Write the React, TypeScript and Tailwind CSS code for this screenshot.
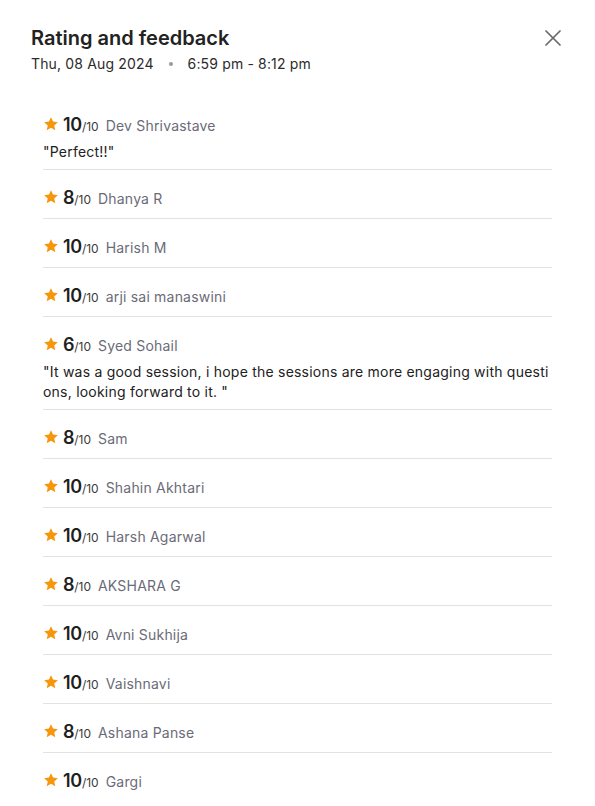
import { X } from "lucide-react";

type Feedback = {
  rating: number;
  name: string;
  comment?: string;
};

const FEEDBACK: Feedback[] = [
  { rating: 10, name: "Dev Shrivastave", comment: "\"Perfect!!\"" },
  { rating: 8, name: "Dhanya R" },
  { rating: 10, name: "Harish M" },
  { rating: 10, name: "arji sai manaswini" },
  {
    rating: 6,
    name: "Syed Sohail",
    comment:
      "\"It was a good session, i hope the sessions are more engaging with questions, looking forward to it. \"",
  },
  { rating: 8, name: "Sam" },
  { rating: 10, name: "Shahin Akhtari" },
  { rating: 10, name: "Harsh Agarwal" },
  { rating: 8, name: "AKSHARA G" },
  { rating: 10, name: "Avni Sukhija" },
  { rating: 10, name: "Vaishnavi" },
  { rating: 8, name: "Ashana Panse" },
  { rating: 10, name: "Gargi" },
];

const Star = () => (
  <svg width="16" height="16" viewBox="0 0 24 24" className="shrink-0">
    <path
      d="M12 1.8l3.05 6.6 7.2.8-5.4 4.9 1.55 7.1-6.4-3.7-6.4 3.7 1.55-7.1-5.4-4.9 7.2-.8z"
      fill="#f5960b"
    />
  </svg>
);

const FeedbackRow = ({ item, last }: { item: Feedback; last: boolean }) => (
  <div
    className={`pt-[15px] ${item.comment ? "pb-[7px]" : "pb-[9px]"} ${last ? "" : "border-b border-[#e2e2e2]"}`}
  >
    <div className="flex h-6 items-center">
      <Star />
      <div className="ml-[4px] flex items-baseline">
        <span className="text-[18px] font-semibold tracking-[-0.3px] text-[#1f1f1f]">{item.rating}</span>
        <span className="text-[12px] text-[#3a3a3a]">/10</span>
        <span className="ml-[7px] text-[14px] tracking-[0.2px] text-[#6b6b78]">{item.name}</span>
      </div>
    </div>
    {item.comment && (
      <p className="mt-[6px] break-all text-[14px] leading-[20px] tracking-[0.22px] text-[#222]">
        {item.comment}
      </p>
    )}
  </div>
);

export default function App() {
  return (
    <div
      className="min-h-[806px] w-[595px] bg-white"
      style={{ fontFamily: "Inter, 'Noto Sans', sans-serif" }}
    >
      <div className="flex items-start justify-between pl-[31px] pr-[28px] pt-[25px]">
        <div>
          <h1 className="text-[20px] font-semibold leading-[26px] text-[#222]">Rating and feedback</h1>
          <div className="mt-[3px] flex items-center text-[14px] leading-5 tracking-[0.15px] text-[#2b2b2b]">
            <span>Thu, 08 Aug 2024</span>
            <span className="mx-[15px] h-[4px] w-[4px] rounded-full bg-[#9a9a9a]" />
            <span>6:59 pm - 8:12 pm</span>
          </div>
        </div>
        <button className="mt-[-1px] text-[#6a6a6a]">
          <X size={28} strokeWidth={1.5} />
        </button>
      </div>

      <div className="ml-[43px] mr-[43px] mt-[23px]">
        {FEEDBACK.map((item, i) => (
          <FeedbackRow key={i} item={item} last={i === FEEDBACK.length - 1} />
        ))}
      </div>
    </div>
  );
}
